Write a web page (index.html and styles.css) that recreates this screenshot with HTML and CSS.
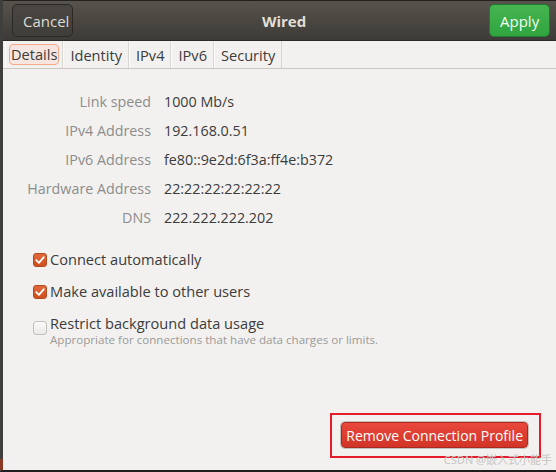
FILE: index.html
```html
<!DOCTYPE html>
<html>
<head>
<meta charset="utf-8">
<link rel="stylesheet" href="styles.css">
</head>
<body>
<div class="window">
  <header class="headerbar">
    <button class="hb-btn cancel">Cancel</button>
    <div class="title">Wired</div>
    <button class="hb-btn apply">Apply</button>
  </header>
  <nav class="tabs">
    <div class="tab active"><span class="focus">Details</span></div>
    <div class="tab">Identity</div>
    <div class="tab">IPv4</div>
    <div class="tab">IPv6</div>
    <div class="tab">Security</div>
  </nav>
  <main class="content">
    <div class="info">
      <div class="label">Link speed</div><div class="value">1000 Mb/s</div>
      <div class="label">IPv4 Address</div><div class="value">192.168.0.51</div>
      <div class="label">IPv6 Address</div><div class="value">fe80::9e2d:6f3a:ff4e:b372</div>
      <div class="label">Hardware Address</div><div class="value">22:22:22:22:22:22</div>
      <div class="label">DNS</div><div class="value">222.222.222.202</div>
    </div>
    <div class="checks">
      <div class="check">
        <span class="box checked"><svg viewBox="0 0 14 14" width="14" height="14"><path d="M3.3 7.2 L5.9 9.8 L10.8 4.2" fill="none" stroke="#fff" stroke-width="1.8" stroke-linecap="round" stroke-linejoin="round"/></svg></span>
        <span class="ctext">Connect automatically</span>
      </div>
      <div class="check">
        <span class="box checked"><svg viewBox="0 0 14 14" width="14" height="14"><path d="M3.3 7.2 L5.9 9.8 L10.8 4.2" fill="none" stroke="#fff" stroke-width="1.8" stroke-linecap="round" stroke-linejoin="round"/></svg></span>
        <span class="ctext">Make available to other users</span>
      </div>
      <div class="check multi">
        <span class="box"></span>
        <div class="ctexts">
          <span class="ctext">Restrict background data usage</span>
          <span class="sub">Appropriate for connections that have data charges or limits.</span>
        </div>
      </div>
    </div>
    <div class="footer">
      <div class="highlight">
        <button class="remove">Remove Connection Profile</button>
      </div>
    </div>
  </main>
  <div class="watermark">CSDN @嵌入式小能手</div>
  <div class="edge-red"></div>
</div>
</body>
</html>
```
FILE: styles.css
```css
html, body {
  margin: 0;
  padding: 0;
}
body {
  width: 556px;
  height: 472px;
  overflow: hidden;
  background: #f2f1f0;
  font-family: "Open Sans", "Noto Sans", "DejaVu Sans", sans-serif;
}
.window {
  position: relative;
  box-sizing: border-box;
  width: 556px;
  height: 472px;
  border-left: 3px solid #3f3f3d;
  border-bottom: 2px solid #1f1f1f;
  background: #f2f1f0;
  display: flex;
  flex-direction: column;
}
.headerbar {
  height: 41px;
  box-sizing: border-box;
  background: linear-gradient(#57534c, #3d3b37);
  display: flex;
  align-items: center;
  justify-content: space-between;
  padding: 0 6px 0 9px;
  border-top: 1px solid #222120;
  border-bottom: 1px solid #2b2a27;
}
.hb-btn {
  height: 33px;
  border-radius: 5px;
  font-family: inherit;
  font-size: 15px;
  padding: 0 10px;
}
.cancel {
  width: 61px;
  background: linear-gradient(#4a4742, #403e3a);
  border: 1px solid #2a2926;
  color: #dedbd5;
}
.apply {
  width: 61px;
  background: linear-gradient(#45b551, #2fa43f);
  border: 1px solid #237a2e;
  color: #f4fff2;
}
.title {
  color: #e2ded6;
  font-weight: bold;
  font-size: 15px;
  margin-left: 6px;
}
.tabs {
  height: 28px;
  box-sizing: border-box;
  display: flex;
  align-items: stretch;
  padding-left: 2px;
  border-bottom: 1px solid #cdc7c2;
  font-size: 14.6px;
  color: #3c3c3c;
}
.tab {
  display: flex;
  align-items: center;
  padding: 0 6px;
  border-right: 1px solid #dad6d2;
  border-left: 1px solid #fbfaf9;
}
.tab.active {
  padding: 0 3px;
}
.focus {
  border: 1px solid #f3a98a;
  border-radius: 4px;
  background: #f6e6df;
  padding: 0 1px;
  line-height: 19px;
}
.content {
  flex: 1;
  display: flex;
  flex-direction: column;
  padding-top: 22px;
}
.info {
  display: grid;
  grid-template-columns: 148px auto;
  column-gap: 13px;
  row-gap: 8px;
  font-size: 14.3px;
  line-height: 21px;
}
.label {
  text-align: right;
  color: #8d8d8b;
}
.value {
  color: #3c3c3c;
}
.checks {
  margin-top: 21px;
  padding-left: 30px;
  display: flex;
  flex-direction: column;
  gap: 11px;
}
.check {
  display: flex;
  align-items: center;
  gap: 3px;
  font-size: 14.6px;
  color: #3c3c3c;
  line-height: 21px;
}
.check.multi {
  align-items: flex-start;
}
.check.multi .box {
  margin-top: 8px;
}
.box {
  width: 12px;
  height: 12px;
  border: 1px solid #c4bfba;
  border-radius: 3px;
  background: linear-gradient(#fbfafa, #ebe9e7);
  display: inline-flex;
  align-items: center;
  justify-content: center;
  overflow: hidden;
}
.box.checked {
  border-color: #b8471c;
  background: linear-gradient(#e0693c, #cf5020);
}
.box svg {
  flex: none;
}
.ctexts {
  display: flex;
  flex-direction: column;
}
.sub {
  font-size: 11.6px;
  line-height: 12px;
  color: #9b9b99;
}
.footer {
  margin-top: auto;
  display: flex;
  justify-content: flex-end;
  padding: 0 15px 12px 0;
}
.highlight {
  border: 2px solid #e51a2a;
  padding: 7px 11px 8px 9px;
}
.remove {
  height: 26px;
  padding: 0 4px;
  border-radius: 4px;
  border: 1px solid #a92a20;
  background: linear-gradient(#e9483c, #d23428);
  color: #ffffff;
  font-family: inherit;
  font-size: 14px;
  box-shadow: 0 0 0 1px #c6c1bc;
}
.watermark {
  position: absolute;
  right: 4px;
  bottom: 3px;
  font-size: 11px;
  color: #c8c6c4;
  font-family: "Noto Sans", "Noto Sans CJK SC", sans-serif;
}
.edge-red {
  position: absolute;
  left: -3px;
  bottom: 0;
  width: 3px;
  height: 11px;
  background: #8a3a22;
}
```
